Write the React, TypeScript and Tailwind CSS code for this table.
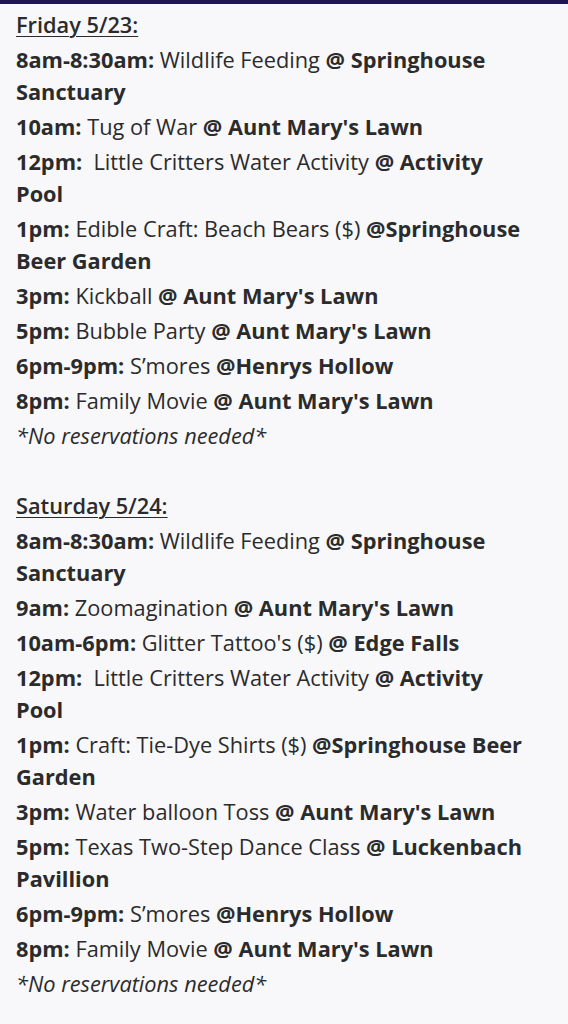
type Item = { time: string; text: string; at?: string; place: string }

const friday: Item[] = [
  { time: '8am-8:30am:', text: ' Wildlife Feeding ', at: '@ ', place: 'Springhouse Sanctuary' },
  { time: '10am:', text: ' Tug of War ', at: '@ ', place: "Aunt Mary's Lawn" },
  { time: '12pm:', text: '\u00a0 Little Critters Water Activity ', at: '@ ', place: 'Activity Pool' },
  { time: '1pm:', text: ' Edible Craft: Beach Bears ($) ', at: '@', place: 'Springhouse Beer Garden' },
  { time: '3pm:', text: ' Kickball ', at: '@ ', place: "Aunt Mary's Lawn" },
  { time: '5pm:', text: ' Bubble Party ', at: '@ ', place: "Aunt Mary's Lawn" },
  { time: '6pm-9pm:', text: ' S\u2019mores ', at: '@', place: 'Henrys Hollow' },
  { time: '8pm:', text: ' Family Movie ', at: '@ ', place: "Aunt Mary's Lawn" },
]

const saturday: Item[] = [
  { time: '8am-8:30am:', text: ' Wildlife Feeding ', at: '@ ', place: 'Springhouse Sanctuary' },
  { time: '9am:', text: ' Zoomagination ', at: '@ ', place: "Aunt Mary's Lawn" },
  { time: '10am-6pm:', text: " Glitter Tattoo's ($) ", at: '@ ', place: 'Edge Falls' },
  { time: '12pm:', text: '\u00a0 Little Critters Water Activity ', at: '@ ', place: 'Activity Pool' },
  { time: '1pm:', text: ' Craft: Tie-Dye Shirts ($) ', at: '@', place: 'Springhouse Beer Garden' },
  { time: '3pm:', text: ' Water balloon Toss ', at: '@ ', place: "Aunt Mary's Lawn" },
  { time: '5pm:', text: ' Texas Two-Step Dance Class ', at: '@ ', place: 'Luckenbach Pavillion' },
  { time: '6pm-9pm:', text: ' S\u2019mores ', at: '@', place: 'Henrys Hollow' },
  { time: '8pm:', text: ' Family Movie ', at: '@ ', place: "Aunt Mary's Lawn" },
]

function Day({ title, items }: { title: string; items: Item[] }) {
  return (
    <div>
      <p className="font-semibold underline underline-offset-[3px] decoration-1 mb-[3px]">{title}</p>
      {items.map((it, i) => (
        <p key={i} className="mb-[3px]">
          <strong className="font-bold">{it.time}</strong>
          {it.text}
          <strong className="font-bold">
            {it.at}
            {it.place}
          </strong>
        </p>
      ))}
      <p className="italic mb-[3px]">*No reservations needed*</p>
    </div>
  )
}

export default function App() {
  return (
    <div className="min-h-[1024px] w-[568px] bg-[#f8f8fb] [font-family:'Open_Sans',sans-serif] text-[21.75px] leading-[32px] text-[#2b2b2b]">
      <div className="h-[4px] bg-[#1f1650]" />
      <div className="pl-4 pt-[5px] w-[528px]">
        <Day title="Friday 5/23:" items={friday} />
        <div className="h-[35px]" />
        <Day title="Saturday 5/24:" items={saturday} />
      </div>
    </div>
  )
}
